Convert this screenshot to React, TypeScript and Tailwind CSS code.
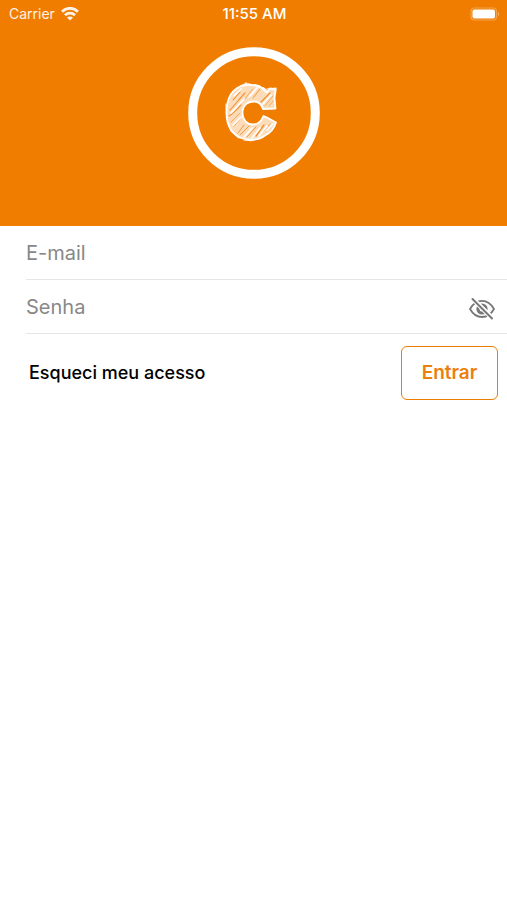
import { useState } from 'react'

function WifiIcon() {
  return (
    <svg className="h-[14px] w-[18px]" viewBox="0 0 18 14" fill="none" stroke="currentColor" strokeWidth="2.8">
      <path d="M1 4.700C5.400.1 12.600.1 17 4.700" />
      <path d="M4 8.200c2.800-2.700 7.200-2.700 10 0" />
      <path d="M9 13.600 6 10.600c1.700-1.600 4.300-1.600 6 0z" fill="currentColor" stroke="none" />
    </svg>
  )
}

function BatteryIcon() {
  return (
    <svg className="h-[14px] w-[30px]" viewBox="0 0 30 14" fill="none">
      <rect x="1" y="1" width="25.5" height="12" rx="3.5" stroke="#fff" strokeOpacity="0.3" strokeWidth="1.2" />
      <rect x="2.5" y="2.5" width="22.5" height="9" rx="2" fill="#fff" />
      <path d="M28 5v4c1.4-.4 1.4-3.6 0-4z" fill="#fff" fillOpacity="0.4" />
    </svg>
  )
}

// Chalk-style mark: rough outline over a scribbled fill
function Logo() {
  return (
    <svg className="size-[132px]" viewBox="0 0 132 132" fill="none" role="img" aria-label="Logo">
      <circle cx="66" cy="66" r="61.3" stroke="#fff" strokeWidth="9" />
      <g transform="translate(32 31)" strokeLinecap="round" strokeLinejoin="round">
        <path
          d="M20 8.500C24 7 28 6.500 32 7 38 7.500 42 9.500 45 13L47 14.500 50 10.500 55.500 11.500 54.500 20 55.500 30.500 43 31C41.500 26 38.500 23.500 34 23.500 27 23.500 22.500 28 22.500 35 22.500 42 27 46.500 33 46.500 38 46.500 41.500 43 43.500 38L47 39.500 56 44.500C54 51 50 55 45 57.500 41 60.500 36 62 30 61.700 22 61.500 15.500 58 11.500 52.500 8 48 6.500 42 6.500 35 6.500 24 10 13 20 8.500z"
          fill="#fcdcb9"
          stroke="#fff"
          strokeWidth="1.8"
        />
        <path
          d="M6 26 6.500 36M21 7.500l5-2 4 .5M26 4.500v2M34 6.500l5 1 5 4M43 9.500l4 3M47 11l9-1M56 10l-.500 6M8 44l3 9 8 7M24 62l7 .8 8-2"
          stroke="#fff"
          strokeWidth="1.1"
        />
        <g stroke="#f09030">
          <path d="M10 32C15 27 20 20 25 15M9 38c5-3 8-7 12-11M13 22l7-8" strokeWidth="1.1" />
          <path d="m11 44 9-9M25 21c3-4 5-7 8-10" strokeWidth="0.7" />
          <path d="m18 55 6-8M20 57l9-9M27 59l9-10M33 20l7-9" strokeWidth="0.9" />
          <path d="m36 58 8-11M41 24l9-9" strokeWidth="1.3" />
          <path d="m43 54 7-8M45 28l8-10M49 28l4-5M14 48l6-7" strokeWidth="0.7" />
        </g>
        <g stroke="#fff" strokeWidth="1.7">
          <path d="M11 35 24 21M13 47l8-8M29 19l8-9M24 59l8-9M14 18l7-7" />
          <path d="m32 60 8-10M43 26l8-9M39 58l8-10M47 52l6-6" />
        </g>
      </g>
    </svg>
  )
}

function EyeOffIcon() {
  return (
    <svg className="h-[22px] w-[26px]" viewBox="0 0 26 22" fill="none" stroke="currentColor" strokeLinecap="round">
      <path d="M1 11C4 5.500 8 2.800 13 2.800S22 5.500 25 11c-3 5.300-7 8-12 8S4 16.300 1 11z" strokeWidth="1.800" strokeLinejoin="round" />
      <circle cx="13" cy="11" r="5.600" fill="currentColor" stroke="none" />
      <circle cx="13" cy="11" r="2.500" fill="#fff" stroke="none" />
      <path d="m4.500 1.500 18 18" stroke="#fff" strokeWidth="4.600" />
      <path d="m3.500 1 19.500 19.500" strokeWidth="1.900" />
    </svg>
  )
}

export default function App() {
  const [showPassword, setShowPassword] = useState(false)

  return (
    <div className="min-h-screen bg-white font-['Inter',sans-serif]">
      <header className="bg-[#f07d00] pb-[47px] text-white">
        {/* Status bar */}
        <div className="grid h-7 grid-cols-3 items-center pr-[7px] pl-[9px]">
          <span className="flex items-center gap-[6px] text-sm text-white/90">
            Carrier
            <WifiIcon />
          </span>
          <span className="text-center text-[15px] font-medium">11:55 AM</span>
          <span className="flex justify-end">
            <BatteryIcon />
          </span>
        </div>
        <div className="mt-[19px] flex justify-center">
          <Logo />
        </div>
      </header>

      <form onSubmit={(e) => e.preventDefault()}>
        <div className="ml-[26px] h-[54px] border-b border-[#e6e6e6]">
          <input
            type="email"
            aria-label="E-mail"
            placeholder="E-mail"
            className="h-full w-full text-xl text-black outline-none placeholder:text-[#888888]"
          />
        </div>
        <div className="ml-[26px] flex h-[54px] items-center border-b border-[#e6e6e6] pr-3">
          <input
            type={showPassword ? 'text' : 'password'}
            aria-label="Senha"
            placeholder="Senha"
            className="h-full min-w-0 flex-1 text-xl text-black outline-none placeholder:text-[#888888]"
          />
          <button
            type="button"
            aria-label="Mostrar senha"
            onClick={() => setShowPassword(!showPassword)}
            className="pt-1 text-[#777777]"
          >
            <EyeOffIcon />
          </button>
        </div>

        <div className="flex items-center justify-between pt-3 pr-[9px] pl-[29px]">
          <button type="button" className="text-lg font-medium text-black">
            Esqueci meu acesso
          </button>
          <button
            type="submit"
            className="h-[54px] w-[97px] rounded-md border border-[#f07d00] text-[19px] font-semibold text-[#ec7f0c]"
          >
            Entrar
          </button>
        </div>
      </form>
    </div>
  )
}
